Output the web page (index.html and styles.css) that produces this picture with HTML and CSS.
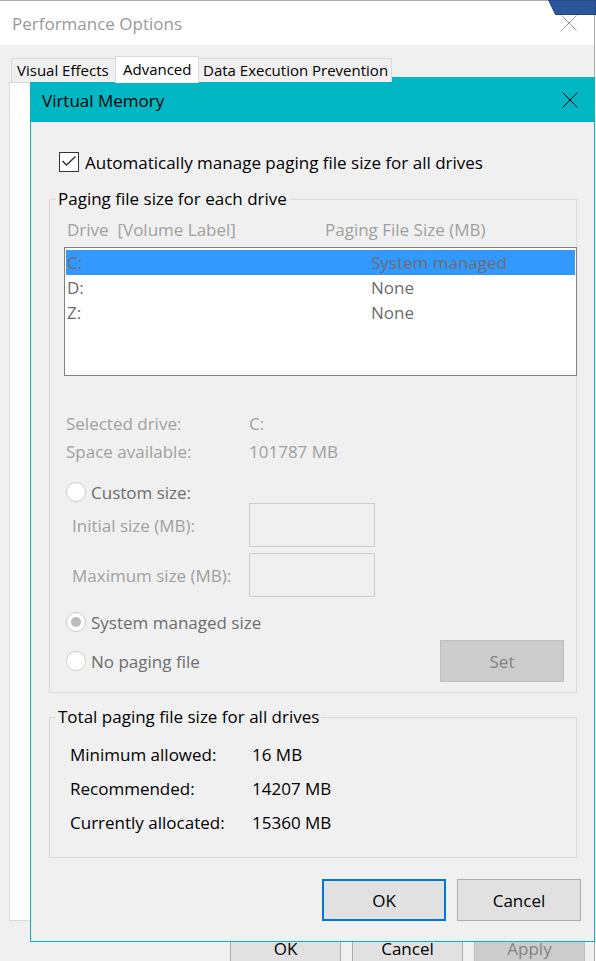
FILE: index.html
```html
<!DOCTYPE html>
<html lang="en">
<head>
<meta charset="utf-8">
<title>Virtual Memory</title>
<link rel="stylesheet" href="styles.css">
</head>
<body>
<div class="perf-window">
  <div class="perf-titlebar">
    <span class="perf-title">Performance Options</span>
    <svg class="close-x close-x--inactive" width="16" height="16" viewBox="0 0 16 16"><path d="M0.5 0.5 L15.5 15.5 M15.5 0.5 L0.5 15.5"/></svg>
  </div>
  <div class="tabs">
    <div class="tab tab--ve">Visual Effects</div>
    <div class="tab tab--active">Advanced</div>
    <div class="tab tab--dep">Data Execution Prevention</div>
  </div>
  <div class="tab-panel"></div>
  <div class="perf-buttons">
    <div class="btn btn--outer">OK</div>
    <div class="btn btn--outer">Cancel</div>
    <div class="btn btn--outer btn--disabled">Apply</div>
  </div>
</div>

<svg class="bg-corner" width="48" height="16" viewBox="0 0 48 16"><polygon points="0.5,0 7.5,14.5 48,14.5 48,0"/></svg>

<div class="vm-dialog">
  <div class="vm-titlebar">
    <span>Virtual Memory</span>
    <svg class="close-x" width="16" height="16" viewBox="0 0 16 16"><path d="M0.5 0.5 L15.5 15.5 M15.5 0.5 L0.5 15.5"/></svg>
  </div>

  <div class="auto-row">
    <span class="checkbox"><svg width="18" height="18" viewBox="0 0 18 18"><path d="M2.5 8 L6.5 12 L15.5 3.5"/></svg></span>
    <span>Automatically manage paging file size for all drives</span>
  </div>

  <fieldset class="group group--drives">
    <legend>Paging file size for each drive</legend>
    <div class="head-row">
      <span class="head-col1">Drive  [Volume Label]</span>
      <span>Paging File Size (MB)</span>
    </div>
    <div class="drive-list">
      <div class="drive-row drive-row--selected"><span class="drive-col1">C:</span><span>System managed</span></div>
      <div class="drive-row"><span class="drive-col1">D:</span><span>None</span></div>
      <div class="drive-row"><span class="drive-col1">Z:</span><span>None</span></div>
    </div>
    <div class="info-rows">
      <div class="info-row"><span class="info-label">Selected drive:</span><span>C:</span></div>
      <div class="info-row"><span class="info-label">Space available:</span><span>101787 MB</span></div>
    </div>
    <div class="radio-row radio-row--custom"><span class="radio"></span><span>Custom size:</span></div>
    <div class="size-row"><span class="size-label">Initial size (MB):</span><span class="size-input"></span></div>
    <div class="size-row size-row--max"><span class="size-label">Maximum size (MB):</span><span class="size-input"></span></div>
    <div class="radio-row radio-row--system"><span class="radio radio--checked"></span><span>System managed size</span></div>
    <div class="nopage-row">
      <div class="radio-row radio-row--inline"><span class="radio"></span><span>No paging file</span></div>
      <div class="btn btn--set">Set</div>
    </div>
  </fieldset>

  <fieldset class="group group--total">
    <legend>Total paging file size for all drives</legend>
    <div class="total-rows">
      <div class="total-row"><span class="total-label">Minimum allowed:</span><span>16 MB</span></div>
      <div class="total-row"><span class="total-label">Recommended:</span><span>14207 MB</span></div>
      <div class="total-row"><span class="total-label">Currently allocated:</span><span>15360 MB</span></div>
    </div>
  </fieldset>

  <div class="vm-buttons">
    <div class="btn btn--dialog btn--default">OK</div>
    <div class="btn btn--dialog">Cancel</div>
  </div>
</div>
</body>
</html>
```
FILE: styles.css
```css
html, body {
  margin: 0;
  padding: 0;
}

body {
  position: relative;
  width: 596px;
  height: 961px;
  overflow: hidden;
  background: #ffffff;
  font-family: "Open Sans", "Noto Sans", sans-serif;
  font-size: 17px;
  color: #000;
}

/* ---------- Outer Performance Options window ---------- */
.perf-window {
  width: 595px;
  height: 961px;
  box-sizing: border-box;
  border-top: 1px solid #ababab;
  border-right: 1px solid #ababab;
  background: #f0f0f0;
  display: flex;
  flex-direction: column;
  overflow: hidden;
}

.perf-titlebar {
  flex: none;
  height: 44px;
  background: #ffffff;
  display: flex;
  align-items: center;
  justify-content: space-between;
  padding: 0 17px 0 12px;
  color: #999999;
}

.close-x {
  display: block;
  fill: none;
  stroke: #000;
  stroke-width: 1;
}

.close-x--inactive {
  stroke: #999999;
}

.tabs {
  flex: none;
  display: flex;
  align-items: flex-end;
  height: 26px;
  margin: 11px 0 0 11px;
  position: relative;
  z-index: 1;
  font-size: 15px;
}

.tab {
  box-sizing: border-box;
  height: 24px;
  line-height: 22px;
  border: 1px solid #d9d9d9;
  border-bottom: none;
  background: #f0f0f0;
  white-space: nowrap;
}

.tab--ve {
  width: 104px;
  padding-left: 5px;
  border-right: none;
}

.tab--active {
  width: 84px;
  height: 27px;
  margin-bottom: -1px;
  padding-left: 7px;
  line-height: 24px;
  background: #ffffff;
}

.tab--dep {
  width: 193px;
  padding-left: 4px;
  border-left: none;
}

.tab-panel {
  flex: none;
  width: 575px;
  height: 839px;
  margin-left: 9px;
  box-sizing: border-box;
  background: #ffffff;
  border: 1px solid #d9d9d9;
}

.perf-buttons {
  flex: none;
  display: flex;
  justify-content: flex-end;
  gap: 11px;
  padding-right: 9px;
  margin-top: 9px;
}

.btn {
  box-sizing: border-box;
  display: flex;
  align-items: center;
  justify-content: center;
  background: #e1e1e1;
  border: 1px solid #adadad;
  color: #000;
}

.btn--outer {
  width: 111px;
  height: 36px;
}

.btn--disabled {
  background: #cccccc;
  border-color: #bfbfbf;
  color: #838383;
}

.bg-corner {
  position: absolute;
  left: 548px;
  top: 0;
  display: block;
}

.bg-corner polygon {
  fill: #2b579a;
  stroke: #1f4580;
  stroke-width: 1;
}

/* ---------- Virtual Memory dialog ---------- */
.vm-dialog {
  position: absolute;
  left: 30px;
  top: 77px;
  width: 565px;
  height: 865px;
  box-sizing: border-box;
  border: 1px solid #00b7c3;
  background: #f0f0f0;
  display: flex;
  flex-direction: column;
}

.vm-titlebar {
  flex: none;
  height: 44px;
  background: #00b7c3;
  display: flex;
  align-items: center;
  justify-content: space-between;
  padding: 0 16px 0 11px;
}

.auto-row {
  display: flex;
  align-items: center;
  gap: 6px;
  height: 20px;
  margin: 30px 0 0 28px;
}

.checkbox {
  box-sizing: border-box;
  width: 20px;
  height: 20px;
  border: 1px solid #333333;
  background: #ffffff;
  display: flex;
}

.checkbox svg {
  display: block;
  fill: none;
  stroke: #333333;
  stroke-width: 1.5;
}

.group {
  flex: none;
  box-sizing: border-box;
  width: 528px;
  margin: 0 0 0 18px;
  padding: 0;
  min-width: 0;
  border: 1px solid #dcdcdc;
}

.group legend {
  margin-left: 6px;
  padding: 0 2px;
  line-height: 24px;
}

.group--drives {
  margin-top: 15px;
  padding-bottom: 10px;
}

.head-row {
  display: flex;
  margin-top: 7px;
  padding-left: 17px;
  line-height: 24px;
  color: #a0a0a0;
}

.head-col1 {
  width: 258px;
  white-space: pre;
}

.drive-list {
  height: 129px;
  box-sizing: border-box;
  margin: 5px -1px 0 14px;
  padding: 2px 1px 1px;
  border: 1px solid #828282;
  background: #ffffff;
}

.drive-row {
  display: flex;
  align-items: center;
  height: 25px;
  padding-left: 1px;
  color: #6d6d6d;
}

.drive-row--selected {
  background: #3399ff;
}

.drive-col1 {
  width: 304px;
}

.info-rows {
  margin-top: 33px;
}

.info-row {
  display: flex;
  align-items: center;
  height: 28px;
  padding-left: 16px;
  color: #a0a0a0;
}

.info-label {
  width: 183px;
}

.radio-row {
  display: flex;
  align-items: center;
  gap: 5px;
  height: 22px;
  padding-left: 16px;
  color: #6d6d6d;
}

.radio-row--custom {
  margin-top: 16px;
}

.radio-row--system {
  margin-top: 14px;
}

.radio-row--inline {
  padding-left: 0;
}

.radio {
  box-sizing: border-box;
  width: 20px;
  height: 20px;
  border: 1px solid #cccccc;
  border-radius: 50%;
  background: #ffffff;
  display: flex;
  align-items: center;
  justify-content: center;
}

.radio--checked::after {
  content: "";
  width: 10px;
  height: 10px;
  border-radius: 50%;
  background: #bcbcbc;
}

.size-row {
  display: flex;
  align-items: center;
  height: 44px;
  padding-left: 22px;
  color: #a0a0a0;
}

.size-row--max {
  margin-top: 6px;
}

.size-label {
  width: 177px;
}

.size-input {
  box-sizing: border-box;
  width: 126px;
  height: 44px;
  border: 1px solid #cccccc;
  background: #f0f0f0;
}

.nopage-row {
  display: flex;
  align-items: center;
  justify-content: space-between;
  height: 42px;
  margin-top: 7px;
  padding: 0 12px 0 16px;
}

.btn--set {
  width: 124px;
  height: 42px;
  background: #cccccc;
  border-color: #bfbfbf;
  color: #838383;
}

.group--total {
  margin-top: 12px;
  padding-bottom: 18px;
}

.total-rows {
  margin-top: 8px;
}

.total-row {
  display: flex;
  align-items: center;
  height: 34px;
  padding-left: 20px;
}

.total-label {
  width: 182px;
}

.vm-buttons {
  display: flex;
  justify-content: flex-end;
  gap: 11px;
  margin-top: 21px;
  padding-right: 13px;
}

.btn--dialog {
  width: 124px;
  height: 42px;
}

.btn--default {
  border: 2px solid #0078d7;
}
```
